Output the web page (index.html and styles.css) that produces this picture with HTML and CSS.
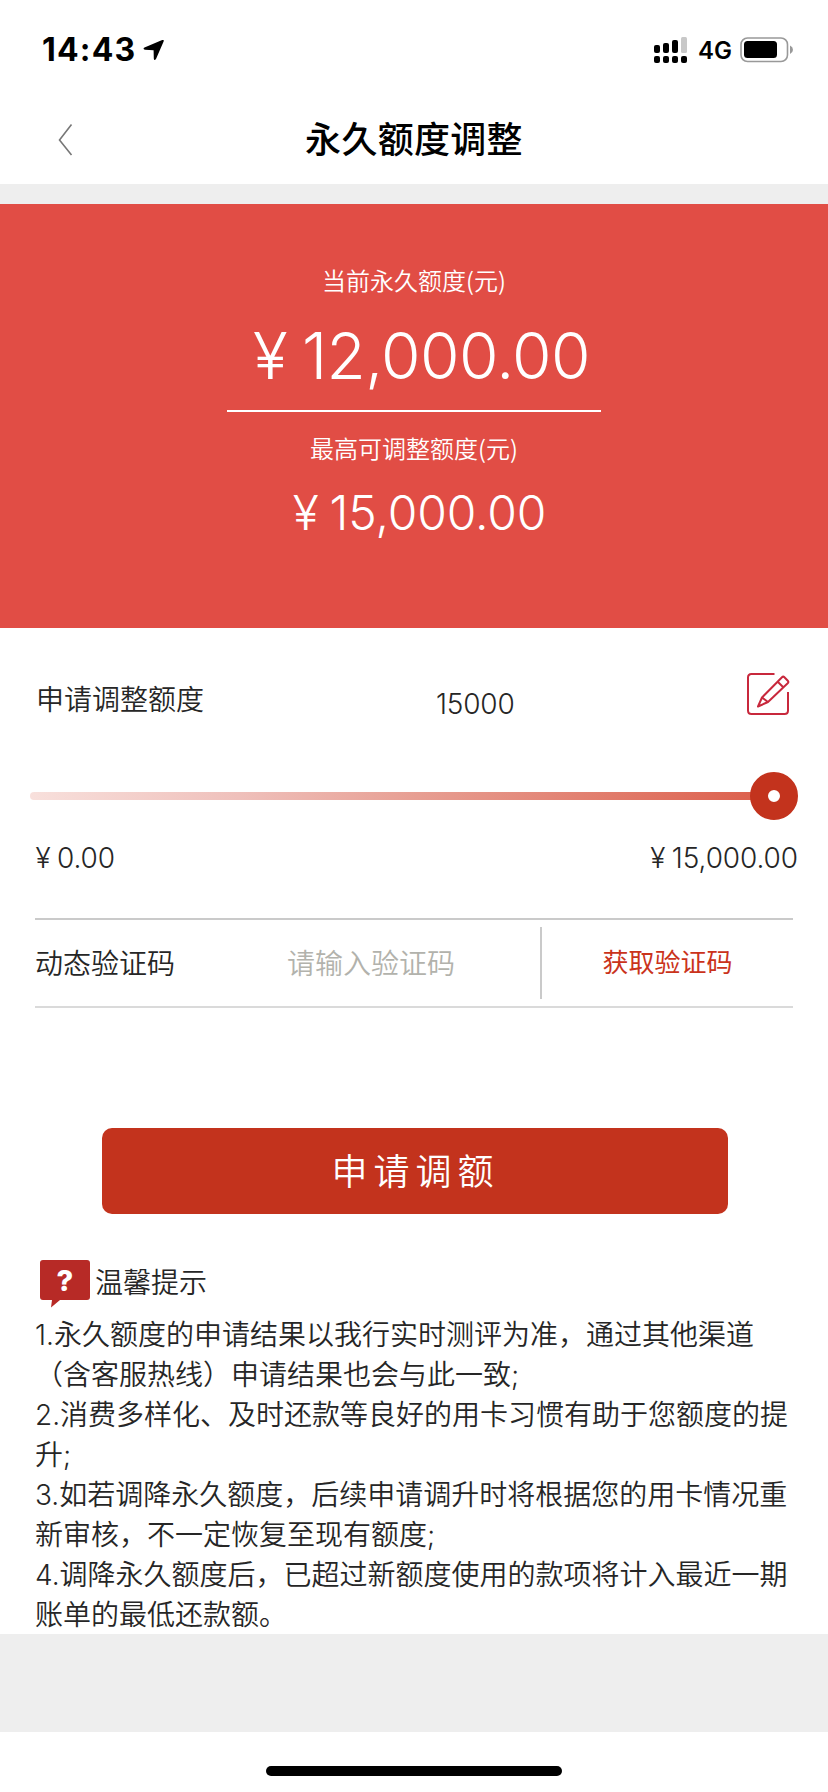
FILE: index.html
```html
<!DOCTYPE html>
<html lang="zh-CN">
<head>
<meta charset="utf-8">
<title>永久额度调整</title>
<link rel="stylesheet" href="styles.css">
</head>
<body>
<div class="screen">
  <header class="status">
    <span class="time">14:43</span>
    <svg class="arrow" width="22" height="22" viewBox="0 0 22 22"><path d="M1.5 8.5 19.2 1.1Q21.4.3 20.6 2.4L13 20Q11.2 22.4 10.8 19.6L10.600 11.200 2 10.800Q-.6 9.900 1.500 8.500Z"/></svg>
    <svg class="signal" width="34" height="28" viewBox="0 0 34 28">
      <rect x="0" y="9" width="6" height="8" rx="2"/><rect x="9" y="7" width="6" height="10" rx="2"/><rect x="18" y="4" width="6" height="13" rx="2"/><rect x="27" y="1" width="6" height="16" rx="1.500" fill="#c8c8c8"/>
      <rect x="0" y="20" width="6" height="7" rx="2"/><rect x="9" y="20" width="6" height="7" rx="2"/><rect x="18" y="20" width="6" height="7" rx="2"/><rect x="27" y="20" width="6" height="7" rx="2"/>
    </svg>
    <span class="network">4G</span>
    <svg class="battery" width="54" height="26" viewBox="0 0 54 26"><rect x="1" y="1" width="46.500" height="23.500" rx="6.500" fill="none" stroke="#999" stroke-width="1.600"/><rect x="4" y="4" width="33" height="17" rx="3.500"/><path d="M50 8.500q3 1.500 3 4.300t-3 4.300z" fill="#999"/></svg>
  </header>
  <nav class="nav">
    <svg class="back" width="16" height="34" viewBox="0 0 16 34"><path d="M13.500 1.500 1.500 17 13.500 32" fill="none" stroke="#777" stroke-width="1.600"/></svg>
    <h1 class="title">永久额度调整</h1>
  </nav>
  <section class="hero">
    <p class="hero-label">当前永久额度(元)</p>
    <p class="amount amount-lg"><span class="yen">¥</span>12,000.00</p>
    <div class="rule"></div>
    <p class="hero-label hero-label-2">最高可调整额度(元)</p>
    <p class="amount amount-md"><span class="yen">¥</span>15,000.00</p>
  </section>
  <main class="content">
    <div class="apply">
      <span class="apply-label">申请调整额度</span>
      <span class="apply-value">15000</span>
      <svg class="edit" width="44" height="44" viewBox="0 0 44 44" fill="none" stroke="#c8283c" stroke-width="2" stroke-linejoin="round"><path d="M28.500 2H5.500Q2 2 2 5.500V38.500Q2 42 5.500 42H38.500Q42 42 42 38.500V20"/><path d="M12 34.500 16 25.500 36 5.200Q37.200 4 38.400 5.200L41.800 8.800Q42.900 10 41.700 11.200L22 30ZM16 25.500 22 30M31.500 9.500 37.500 15.500"/></svg>
    </div>
    <div class="slider"><div class="thumb"></div></div>
    <div class="range"><span><span class="yen">¥</span>0.00</span><span><span class="yen">¥</span>15,000.00</span></div>
    <div class="code">
      <span class="code-label">动态验证码</span>
      <span class="code-input">请输入验证码</span>
      <span class="code-send">获取验证码</span>
    </div>
    <div class="submit">申请调额</div>
    <div class="tips-head">
      <svg class="bubble" width="52" height="48" viewBox="0 0 52 48"><path d="M4 0H48Q51 0 51 3V37Q51 40 48 40H21L12 47.500 13 40H4Q1 40 1 37V3Q1 0 4 0Z" fill="#b72a26"/><text x="26" y="31" text-anchor="middle" class="mark">?</text></svg>
      <span class="tips-title">温馨提示</span>
    </div>
    <p class="tips">1.永久额度的申请结果以我行实时测评为准，通过其他渠道<br>（含客服热线）申请结果也会与此一致;<br>2.消费多样化、及时还款等良好的用卡习惯有助于您额度的提<br>升;<br>3.如若调降永久额度，后续申请调升时将根据您的用卡情况重<br>新审核，不一定恢复至现有额度;<br>4.调降永久额度后，已超过新额度使用的款项将计入最近一期<br>账单的最低还款额。</p>
  </main>
  <div class="gray"></div>
  <footer class="home"><div class="home-bar"></div></footer>
</div>
</body>
</html>
```
FILE: styles.css
```css
* { box-sizing: border-box; }
body { margin: 0; background: #fff; }
h1, p { margin: 0; font-weight: inherit; }
.screen {
  width: 828px; height: 1792px; overflow: hidden;
  display: flex; flex-direction: column;
  font-family: Inter, "Noto Sans CJK SC", sans-serif;
  font-size: 28px; color: #262626; white-space: nowrap;
}
svg { display: block; flex: none; }

.status { height: 96px; padding: 36px 34px 0 42px; display: flex; align-items: flex-start; color: #000; }
.time { width: 101px; font-size: 32px; font-weight: 700; line-height: 28px; letter-spacing: 1.2px; }
.arrow { margin-top: 3px; }
.signal { margin-left: auto; margin-right: 10px; }
.network { width: 42px; font-size: 24px; font-weight: 600; line-height: 30px; }
.battery { margin-top: 1px; }

.nav { height: 88px; display: grid; grid-template-columns: 58px 190px 332px 1fr; align-items: center; color: #000; }
.back { grid-column: 2; }
.title { grid-column: 3; text-align: center; font: 500 36px/50px "Noto Sans CJK SC", sans-serif; letter-spacing: .3px; margin-top: -7px; }

.hero {
  height: 444px; border-top: 20px solid #eee; background: #e14d45; color: #fff;
  display: flex; flex-direction: column; align-items: center; padding-top: 58px;
}
.hero-label { font: 350 24px/36px "Noto Sans CJK SC", sans-serif; }
.amount { font-family: Inter, sans-serif; font-weight: 350; }
.yen { display: inline-block; width: 1em; text-align: center; }
.amount-lg { font-size: 64px; line-height: 80px; margin-top: 18px; letter-spacing: -.6px; }
.rule { width: 374px; height: 2px; background: #fff; margin-top: 14px; }
.hero-label-2 { margin-top: 18px; }
.amount-md { font-size: 48px; line-height: 60px; margin-top: 17px; letter-spacing: -.1px; }

.content { height: 1006px; padding: 0 35px; }
.apply { height: 164px; display: grid; grid-template-columns: 400px 310px 44px; align-items: start; padding: 43px 0 0 1px; }
.apply-label { font: 350 28px/40px "Noto Sans CJK SC", sans-serif; padding-top: 7px; }
.apply-value { font-weight: 350; line-height: 40px; padding-top: 13px; letter-spacing: -.2px; }
.edit { margin-top: 1px; }
.slider {
  position: relative; height: 8px; margin: 0 -5px; border-radius: 4px; width: 746px;
  background: linear-gradient(90deg, #f8e0dc, #efc0bb 28%, #e79e92 52%, #dc5d49);
}
.thumb { position: absolute; right: -22px; top: -20px; width: 48px; height: 48px; border-radius: 50%; border: 18px solid #c3331d; background: #fff; }
.range { display: flex; justify-content: space-between; margin: 38px -5px 0 -6px; line-height: 40px; font-weight: 350; letter-spacing: -.1px; }
.code {
  height: 90px; margin-top: 40px; border-top: 2px solid #cacaca; border-bottom: 2px solid #dadada;
  display: grid; grid-template-columns: 252px 255px 1fr; align-items: center;
  font-family: "Noto Sans CJK SC", sans-serif;
}
.code-label, .code-input { font-weight: 350; padding-bottom: 2px; }
.code-input { color: #b2b2ac; }
.code-send { height: 72px; margin-top: -1px; margin-left: -2px; border-left: 2px solid #cacaca; text-align: center; font-size: 26px; line-height: 67px; color: #ca331b; }
.submit {
  width: 626px; height: 86px; margin: 120px 0 0 67px; border-radius: 10px; background: #c3331d; color: #fff;
  text-align: center; font: 350 36px/83px "Noto Sans CJK SC", sans-serif; letter-spacing: 6px; text-indent: 1px;
}
.tips-head { height: 101px; padding: 46px 0 0 4px; display: flex; align-items: flex-start; }
.mark { font: 800 29px Inter, sans-serif; fill: #fff; }
.tips-title { font: 350 28px/40px "Noto Sans CJK SC", sans-serif; margin: 1px 0 0 4px; }
.tips { font-size: 28px; line-height: 40px; font-weight: 350; }
.gray { height: 98px; background: #eee; }
.home { height: 60px; padding-top: 34px; }
.home-bar { width: 296px; height: 10px; border-radius: 5px; background: #000; margin: 0 auto; }
```
